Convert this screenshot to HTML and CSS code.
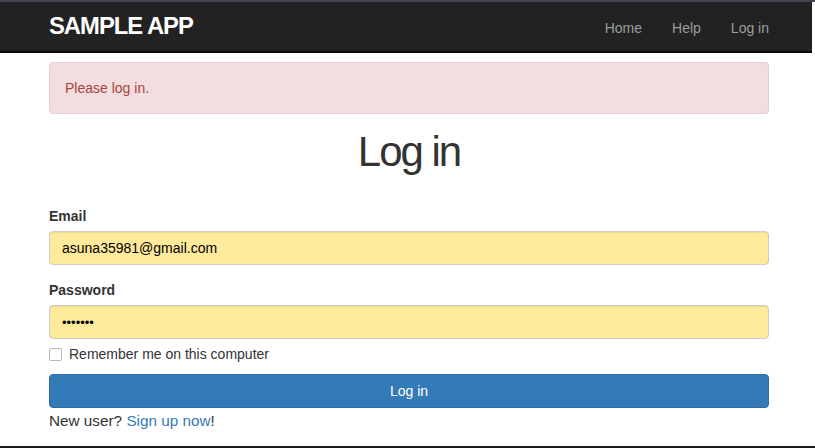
FILE: index.html
```html
<!DOCTYPE html>
<html lang="en">
<head>
<meta charset="utf-8">
<title>Log in | Sample App</title>
<link rel="stylesheet" href="styles.css">
</head>
<body>
<div class="page">
  <div class="top-strip"></div>
  <header class="navbar">
    <div class="nav-inner">
      <a class="brand" href="#">sample app</a>
      <nav class="nav-links">
        <a href="#">Home</a>
        <a href="#">Help</a>
        <a href="#">Log in</a>
      </nav>
    </div>
  </header>
  <main class="container">
    <div class="alert">Please log in.</div>
    <h1 class="title">Log in</h1>
    <form class="login-form">
      <label class="field-label" for="email">Email</label>
      <input class="field" id="email" type="text" value="asuna35981@gmail.com">
      <label class="field-label" for="password">Password</label>
      <input class="field field-pass" id="password" type="text" value="•••••••">
      <label class="checkbox-row"><input class="check" type="checkbox"><span>Remember me on this computer</span></label>
      <button class="btn" type="button">Log in</button>
    </form>
    <p class="signup">New user? <a href="#">Sign up now</a>!</p>
  </main>
  <div class="bottom-line"></div>
</div>
</body>
</html>
```

FILE: styles.css
```css
* { box-sizing: border-box; }
html, body { margin: 0; padding: 0; background: #fff; }
body {
  font-family: "Liberation Sans", Arial, Helvetica, sans-serif;
  font-size: 14px;
  line-height: 20px;
  color: #333;
  overflow: hidden;
}
.page {
  height: 448px;
  display: flex;
  flex-direction: column;
}
.top-strip {
  height: 2px;
  background: #45444f;
  flex: none;
}
.navbar {
  width: 812px;
  height: 51px;
  background: #222;
  border-bottom: 2px solid #0b0b0b;
  flex: none;
}
.nav-inner {
  width: 769px;
  padding-left: 49px;
  display: flex;
  justify-content: space-between;
  align-items: flex-start;
}
.brand {
  display: block;
  padding-top: 12px;
  font-size: 23.8px;
  line-height: 24px;
  font-weight: bold;
  letter-spacing: -1px;
  text-transform: uppercase;
  color: #fff;
  text-decoration: none;
}
.nav-links {
  display: flex;
  margin-right: -15px;
}
.nav-links a {
  display: block;
  padding: 16px 15px 13px;
  color: #9d9d9d;
  text-decoration: none;
}
.container {
  width: 769px;
  padding-left: 49px;
  flex: none;
}
.alert {
  margin-top: 9px;
  padding: 15px;
  border: 1px solid #ebccd1;
  border-radius: 4px;
  background: #f2dede;
  color: #a94442;
}
.title {
  margin: 15px 0 31px;
  font-size: 42px;
  line-height: 46px;
  font-weight: normal;
  letter-spacing: -2px;
  text-align: center;
  color: #333;
}
.login-form { display: flex; flex-direction: column; }
.field-label {
  display: block;
  font-weight: bold;
  margin-bottom: 5px;
}
.field {
  width: 100%;
  height: 34px;
  margin: 0 0 15px;
  padding: 6px 12px;
  border: 1px solid #ccc;
  border-radius: 4px;
  background: #ffe99a;
  box-shadow: inset 0 1px 1px rgba(0,0,0,.075);
  font-family: inherit;
  font-size: 14px;
  color: #000;
  outline: none;
}
.field-pass { letter-spacing: 0; font-size: 13px; }
.checkbox-row {
  display: flex;
  align-items: center;
  height: 20px;
  margin-top: -10px;
  margin-bottom: 10px;
}
.check {
  appearance: none;
  -webkit-appearance: none;
  width: 13px;
  height: 13px;
  margin: 1px 7px 0 0;
  border: 1px solid #b8b8b8;
  border-radius: 2px;
  background: #fff;
}
.btn {
  width: 100%;
  height: 34px;
  border: 1px solid #2e6da4;
  border-radius: 4px;
  background: #337ab7;
  color: #fff;
  font-family: inherit;
  font-size: 14px;
  line-height: 20px;
  padding: 6px 12px;
}
.signup {
  margin: 3px 0 0;
  font-size: 15.3px;
  line-height: 20px;
}
.signup a { color: #337ab7; text-decoration: none; }
.bottom-line {
  margin-top: auto;
  height: 2px;
  background: #1a1a1a;
  flex: none;
}
```
